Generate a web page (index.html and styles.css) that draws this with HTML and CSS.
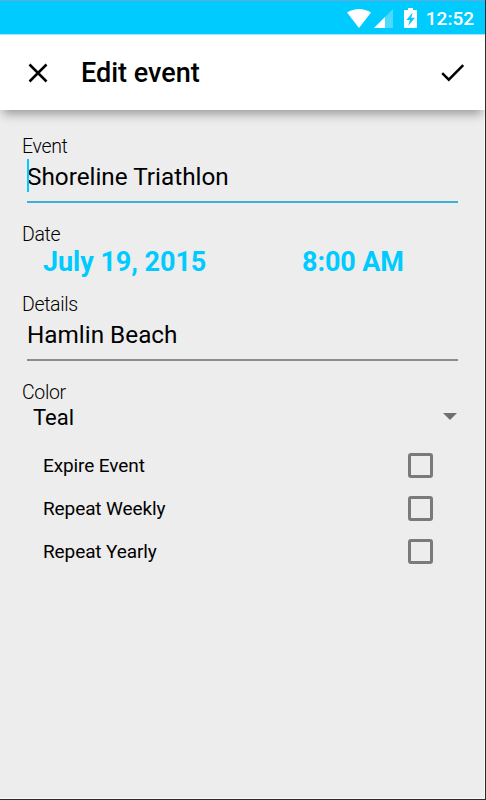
FILE: index.html
```html
<!DOCTYPE html>
<html lang="en">
<head>
  <meta charset="UTF-8">
  <title>Edit event</title>
  <link rel="stylesheet" href="styles.css">
</head>
<body>
  <div class="screen">
    <div class="status-bar">
      <svg class="wifi" width="24" height="19" viewBox="0 0 24 19"><path d="M0 3.6C7-1.1 17-1.1 24 3.6L12 19z" fill="#fff"/></svg>
      <svg class="signal" width="19" height="19" viewBox="0 0 19 19"><path d="M19 0v19H0z" fill="#fff" fill-opacity=".3"/><path d="M11 8v11H0z" fill="#fff"/></svg>
      <svg class="battery" width="13" height="20" viewBox="0 0 13 20"><path d="M4 0h5v2h3q1 0 1 1v16q0 1-1 1H1q-1 0-1-1V3q0-1 1-1h3z" fill="#fff"/><path d="M8.8 4.3L2.4 12h3.5l-1.6 5.7L11 9.8H7.2z" fill="#00cbff"/></svg>
      <span class="clock">12:52</span>
    </div>
    <header class="app-bar">
      <svg class="close" width="20" height="20" viewBox="0 0 20 20"><path d="M1.5 1.5l17 17M18.5 1.5l-17 17" fill="none" stroke="#000" stroke-width="2.5"/></svg>
      <h1>Edit event</h1>
      <svg class="done" width="24" height="18" viewBox="0 0 24 18"><path d="M1.2 9.2l6.6 6.5L22.2 1.2" fill="none" stroke="#000" stroke-width="2.5"/></svg>
    </header>
    <main class="form">
      <div class="label">Event</div>
      <div class="field active"><span class="cursor"></span>Shoreline Triathlon</div>

      <div class="label">Date</div>
      <div class="when">
        <span class="date">July 19, 2015</span>
        <span class="time">8:00 AM</span>
      </div>

      <div class="label">Details</div>
      <div class="field">Hamlin Beach</div>

      <div class="label">Color</div>
      <div class="spinner">
        <span>Teal</span>
        <span class="arrow"></span>
      </div>

      <div class="options">
        <div class="option"><span>Expire Event</span><span class="box"></span></div>
        <div class="option"><span>Repeat Weekly</span><span class="box"></span></div>
        <div class="option"><span>Repeat Yearly</span><span class="box"></span></div>
      </div>
    </main>
  </div>
</body>
</html>
```
FILE: styles.css
```css
* {
  box-sizing: border-box;
}

body {
  margin: 0;
  font-family: Roboto, sans-serif;
  color: #000;
}

svg {
  display: block;
}

.screen {
  display: flex;
  flex-direction: column;
  height: 800px;
  background: #ededed;
  border-right: 1px solid #2b2b2d;
  border-bottom: 1px solid #2b2b2d;
  box-shadow: inset -1px -1px #f8f8f8;
  overflow: hidden;
}

.status-bar {
  display: flex;
  align-items: center;
  justify-content: flex-end;
  height: 34px;
  padding: 1px 11px 0 0;
  background: #00cbff;
  border-top: 1px solid #6ba5d6;
  color: #fff;
}

.wifi {
  margin-right: 3px;
}

.signal {
  margin-right: 11px;
}

.battery {
  margin-right: 9px;
}

.clock {
  font-size: 19px;
  font-weight: 500;
}

.app-bar {
  display: flex;
  align-items: center;
  height: 76px;
  padding: 0 20px 0 28px;
  background: #fff;
  border-top: 1px solid #a9e6fb;
  box-shadow: 0 7px 10px -3px rgba(0, 0, 0, 0.36);
}

.app-bar h1 {
  margin: 1px 0 0 33px;
  font-size: 27px;
  font-weight: 500;
}

.done {
  margin-left: auto;
}

.form {
  padding: 25px 27px 0 22px;
}

.label {
  margin-bottom: -2px;
  font-size: 19.5px;
  font-weight: 300;
  line-height: 24px;
  letter-spacing: -0.35px;
}

.field {
  position: relative;
  margin: 0 0 20px 5px;
  padding-bottom: 5px;
  border-bottom: 2px solid #8c8c8c;
  font-size: 24.3px;
  line-height: 39px;
}

.field.active {
  border-bottom: 2px solid #36b3d6;
}

.cursor {
  position: absolute;
  top: 2px;
  left: 0;
  width: 2px;
  height: 33px;
  background: #00cbff;
}

.when {
  display: flex;
  margin: 1px 0 15px 21px;
  font-size: 27px;
  font-weight: 700;
  line-height: 32px;
  color: #00cbff;
}

.date {
  width: 259px;
  letter-spacing: -0.05px;
}

.time {
  letter-spacing: -0.1px;
}

.spinner {
  display: flex;
  align-items: center;
  justify-content: space-between;
  padding: 0 1px 0 11px;
  font-size: 22px;
  line-height: 30px;
}

.arrow {
  margin-top: -4px;
  border: 7px solid transparent;
  border-top: 7px solid #6f6f6f;
  border-bottom: 0;
}

.options {
  margin-top: 11px;
  padding: 0 25px 0 21px;
}

.option {
  display: flex;
  align-items: center;
  justify-content: space-between;
  height: 43px;
  font-size: 19px;
  letter-spacing: -0.1px;
}

.box {
  width: 25px;
  height: 25px;
  border: 3px solid #7a7a7a;
  border-radius: 3px;
}
```
